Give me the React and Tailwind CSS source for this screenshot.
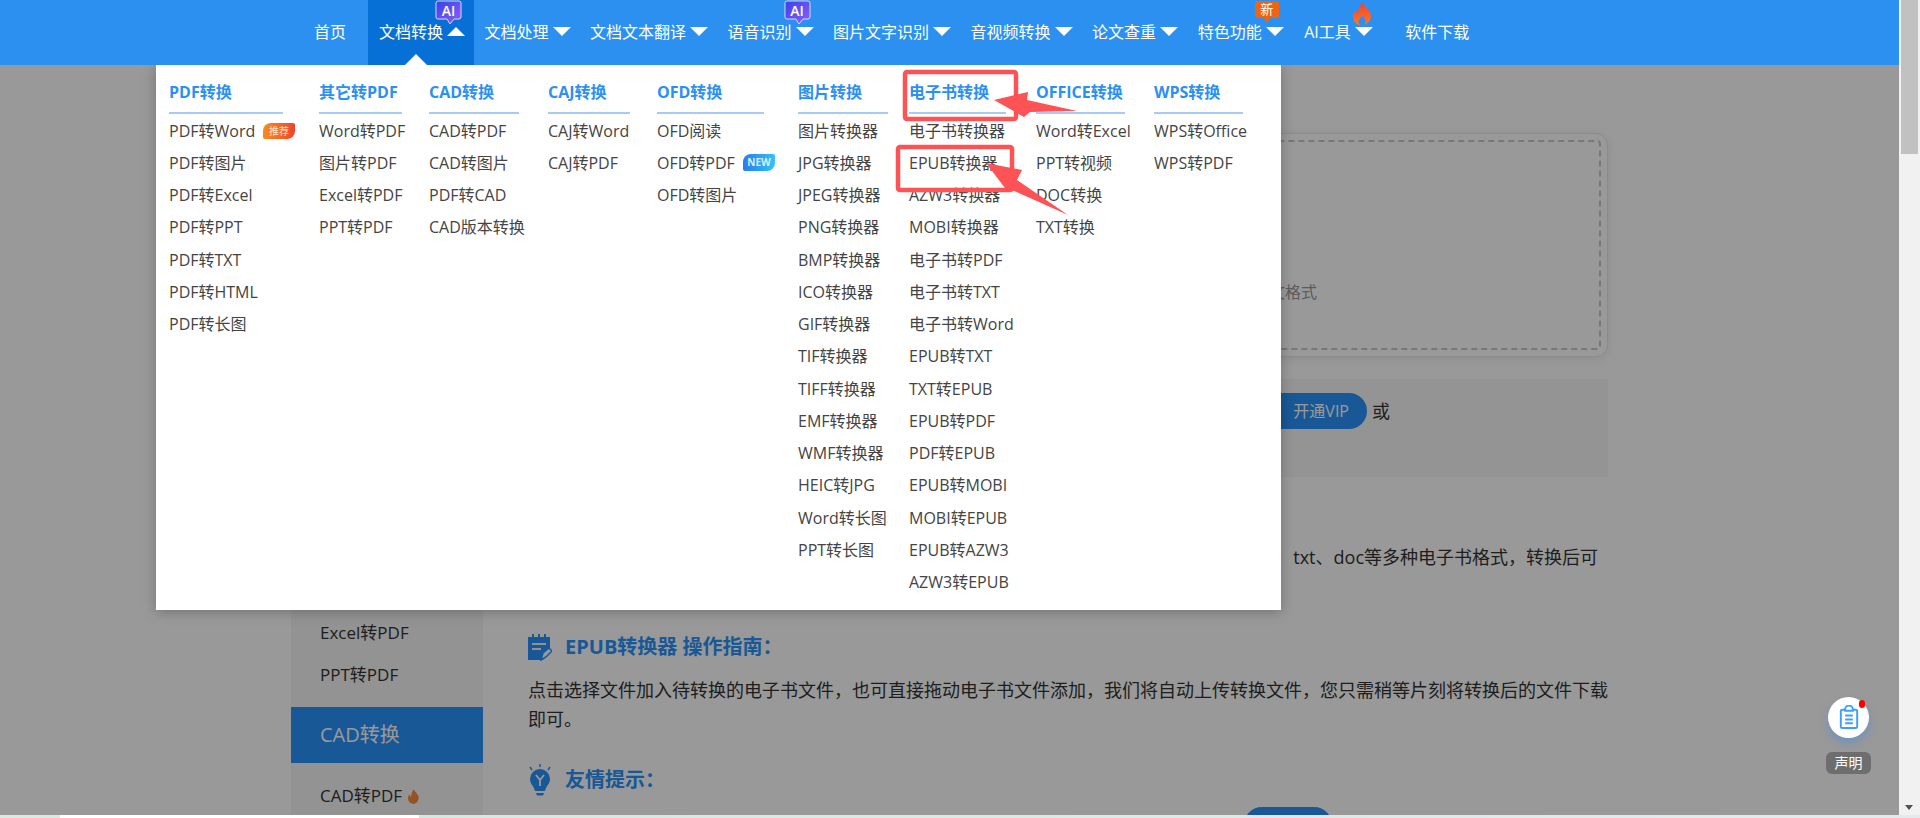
import React from "react";

const font = { fontFamily: '"Open Sans", "Noto Sans CJK SC", sans-serif' };

const navItems = [
  { label: "首页", plain: true },
  { label: "文档转换", active: true, badge: "ai" },
  { label: "文档处理" },
  { label: "文档文本翻译" },
  { label: "语音识别", badge: "ai" },
  { label: "图片文字识别" },
  { label: "音视频转换" },
  { label: "论文查重" },
  { label: "特色功能", badge: "new" },
  { label: "AI工具", badge: "fire" },
  { label: "软件下载", plain: true },
];

const columns = [
  { title: "PDF转换", width: "w-[114px]", gap: "mr-[36px]", items: ["PDF转Word", "PDF转图片", "PDF转Excel", "PDF转PPT", "PDF转TXT", "PDF转HTML", "PDF转长图"] },
  { title: "其它转PDF", width: "w-[83px]", gap: "mr-[27px]", items: ["Word转PDF", "图片转PDF", "Excel转PDF", "PPT转PDF"] },
  { title: "CAD转换", width: "w-[90px]", gap: "mr-[29px]", items: ["CAD转PDF", "CAD转图片", "PDF转CAD", "CAD版本转换"] },
  { title: "CAJ转换", width: "w-[82px]", gap: "mr-[27px]", items: ["CAJ转Word", "CAJ转PDF"] },
  { title: "OFD转换", width: "w-[107px]", gap: "mr-[34px]", items: ["OFD阅读", "OFD转PDF", "OFD转图片"] },
  { title: "图片转换", width: "w-[90px]", gap: "mr-[21px]", items: ["图片转换器", "JPG转换器", "JPEG转换器", "PNG转换器", "BMP转换器", "ICO转换器", "GIF转换器", "TIF转换器", "TIFF转换器", "EMF转换器", "WMF转换器", "HEIC转JPG", "Word转长图", "PPT转长图"] },
  { title: "电子书转换", width: "w-[97px]", gap: "mr-[30px]", items: ["电子书转换器", "EPUB转换器", "AZW3转换器", "MOBI转换器", "电子书转PDF", "电子书转TXT", "电子书转Word", "EPUB转TXT", "TXT转EPUB", "EPUB转PDF", "PDF转EPUB", "EPUB转MOBI", "MOBI转EPUB", "EPUB转AZW3", "AZW3转EPUB"] },
  { title: "OFFICE转换", width: "w-[89px]", gap: "mr-[29px]", items: ["Word转Excel", "PPT转视频", "DOC转换", "TXT转换"] },
  { title: "WPS转换", width: "w-[89px]", gap: "", items: ["WPS转Office", "WPS转PDF"] },
];

const guideText = "点击选择文件加入待转换的电子书文件\uFF0C也可直接拖动电子书文件添加\uFF0C我们将自动上传转换文件\uFF0C您只需稍等片刻将转换后的文件下载即可。";

function Flame({ className }) {
  return (
    <svg viewBox="0 0 20 24" className={className}>
      <defs>
        <linearGradient id="flameFill" x1="0" y1="0" x2="0" y2="1">
          <stop offset="0" stopColor="#f5402a" />
          <stop offset="1" stopColor="#fb7a2a" />
        </linearGradient>
      </defs>
      <path d="M11 0c0 5 7 7 8 13 .8 5-4 10-9 10.500C5 24 1 19 1 14.500c0-3 1.500-5.500 3-7 0 2 .8 3.400 2 4C6 7 8 3 11 0z" fill="url(#flameFill)" />
      <path d="M10.500 13c.4 2 3 3.500 3 6 0 2-1.500 5-3.500 5s-3.500-2.500-3.500-4.500c0-2.500 3-4 4-6.500z" fill="#2b90f0" />
    </svg>
  );
}

function AiBadge() {
  return (
    <div className="absolute top-0 right-[11.500px] w-[27px] h-[25px]">
      <svg viewBox="0 0 27 25" className="absolute inset-0 w-full h-full">
        <defs>
          <linearGradient id="aiFill" x1="0" y1="0" x2="1" y2="1">
            <stop offset="0" stopColor="#3d3fe8" />
            <stop offset="1" stopColor="#8a63f7" />
          </linearGradient>
        </defs>
        <path d="M3 1h21a2 2 0 0 1 2 2v14a2 2 0 0 1-2 2h-5l-4 5-3-5H3a2 2 0 0 1-2-2V3a2 2 0 0 1 2-2z" fill="url(#aiFill)" stroke="#d9d6fb" strokeWidth="1" />
      </svg>
      <span className="absolute left-0 right-0 top-[1px] text-center text-[14px] leading-[19px] font-semibold text-white">AI</span>
    </div>
  );
}

function NewBadge() {
  return (
    <div className="absolute top-[1px] right-[13.500px] w-[24px] h-[22px]">
      <svg viewBox="0 0 24 22" className="absolute inset-0 w-full h-full">
        <path d="M2 0h20a2 2 0 0 1 2 2v13a2 2 0 0 1-2 2h-7l-3 5-3-5H2a2 2 0 0 1-2-2V2a2 2 0 0 1 2-2z" fill="#f2630f" />
      </svg>
      <span className="absolute left-0 right-0 top-0 text-center text-[13px] leading-[17px] text-white">新</span>
    </div>
  );
}

function NavItem({ item }) {
  let pad = "pl-[11px] pr-[8.500px]";
  if (item.plain) pad = "px-[22px]";
  if (item.badge === "fire") pad = "pl-[12px] pr-[10.500px]";
  return (
    <div className={`relative h-full flex items-start pt-[22px] ${pad} ${item.active ? "bg-[#0670d6]" : ""}`}>
      <span className="text-[16px] leading-[21px] text-white whitespace-nowrap">{item.label}</span>
      {!item.plain && (
        <span className={`ml-[4px] mt-[5px] w-0 h-0 border-x-[9px] border-x-transparent ${item.active ? "border-b-[9px] border-b-white" : "border-t-[9px] border-t-white"}`} />
      )}
      {item.badge === "ai" && <AiBadge />}
      {item.badge === "new" && <NewBadge />}
      {item.badge === "fire" && <Flame className="absolute top-[2px] right-[11px] w-[20px] h-[24px]" />}
      {item.active && (
        <span className="absolute left-[37px] bottom-0 w-0 h-0 border-x-[11px] border-x-transparent border-b-[11px] border-b-white" />
      )}
    </div>
  );
}

function MenuColumn({ col }) {
  return (
    <div className={`${col.width} ${col.gap} shrink-0`}>
      <div className="h-[37px] border-b-2 border-[#a8cbf5] text-[16px] leading-[21px] pt-[5px] font-bold text-[#2a90f2] whitespace-nowrap">{col.title}</div>
      <div className="pt-[0.500px]">
        {col.items.map((name) => (
          <div key={name} className="relative h-[32.250px] text-[16px] leading-[32px] text-[#444] whitespace-nowrap">
            {name}
            {name === "PDF转Word" && (
              <span className="absolute left-[94px] top-[8px] w-[32px] h-[16px] rounded-tl-[8px] rounded-br-[8px] rounded-tr-[2px] rounded-bl-[2px] bg-gradient-to-r from-[#fb8a1e] to-[#f0402e] text-[10px] leading-[16px] text-center text-[#ffe3d4]">推荐</span>
            )}
            {name === "OFD转PDF" && (
              <span className="absolute left-[86px] top-[7px] w-[32px] h-[17px] rounded-tl-[8px] rounded-br-[8px] rounded-tr-[2px] rounded-bl-[2px] bg-gradient-to-r from-[#2a7bf0] to-[#35c3f5] text-[10px] leading-[17px] font-bold text-center text-[#d8f0ff]">NEW</span>
            )}
          </div>
        ))}
      </div>
    </div>
  );
}

function DropDown() {
  return (
    <div className="absolute left-[156px] top-[65px] w-[1125px] h-[545px] bg-white shadow-[0_2px_12px_rgba(0,0,0,0.25)] flex items-start pl-[13px] pt-[12px]">
      {columns.map((col) => (
        <MenuColumn key={col.title} col={col} />
      ))}
    </div>
  );
}

function NoteIcon() {
  return (
    <svg viewBox="0 0 24 28" className="w-[24px] h-[28px]">
      <path d="M0 4h4V1h2v3h4V1h2v3h4V1h2v3h4v14l-7 9H0z" fill="#2b93fa" />
      <path d="M4 10h14v2H4zM4 15h9v2H4z" fill="#f2f2f2" />
      <path d="M13 27l2-7 6-5 3 3-6 6z" fill="#fff" stroke="#2b93fa" strokeWidth="1.500" />
    </svg>
  );
}

function BulbIcon() {
  return (
    <svg viewBox="0 0 24 32" className="w-[24px] h-[32px]">
      <path d="M12 0v3M2 3l2 3M22 3l-2 3" stroke="#2b93fa" strokeWidth="1.500" />
      <path d="M12 5a10 10 0 0 1 10 10c0 5-4 7-5 12H7c-1-5-5-7-5-12A10 10 0 0 1 12 5z" fill="#2b93fa" />
      <path d="M8 29h8l-1 2.500H9z" fill="#2b93fa" />
      <path d="M8 11l4 5 4-5M12 16v6" stroke="#fff" strokeWidth="1.800" fill="none" />
    </svg>
  );
}

function PageBelow() {
  return (
    <div className="flex h-full pl-[291px] bg-white text-[#333]">
      <div className="w-[192px] shrink-0 bg-[#f5f5f5] pt-[547px]">
        <div className="pl-[29px] text-[17px] leading-[42px]">Excel转PDF</div>
        <div className="pl-[29px] text-[17px] leading-[42px]">PPT转PDF</div>
        <div className="mt-[11px] h-[56px] bg-[#2b93fa] pl-[29px] text-[20px] leading-[56px] text-white">CAD转换</div>
        <div className="mt-[12px] pl-[29px] flex items-center gap-[6px] text-[17px] leading-[42px]">
          CAD转PDF
          <svg viewBox="0 0 12 16" className="w-[11px] h-[15px]">
            <path d="M6.500 0c.5 2.500 4 4.500 5 8 .8 4-2.500 8-5.500 8-3.500 0-6-3-6-6 0-2 1-3.500 2-4.500 0 1.500.5 2.500 1.500 3C3.500 5 4.500 2 6.500 0z" fill="#f98a3d" />
          </svg>
        </div>
      </div>
      <div className="ml-[45px] w-[1080px] shrink-0 pt-[68px]">
        <div className="relative h-[224px] rounded-[12px] border border-[#e8e8e8] bg-white shadow-[0_2px_10px_rgba(0,0,0,0.08)] p-[6px]">
          <div className="h-full rounded-[4px] border-2 border-dashed border-[#c8c8c8] flex items-start justify-end pr-[282px] pt-[138px] text-[16px] leading-[24px] text-[#999]">
            支持电子书、文档、图文格式
          </div>
        </div>
        <div className="mt-[22px] h-[98px] bg-[#f7f7f7] flex items-start justify-end pt-[14px] pr-[218px]">
          <span className="h-[36px] w-[124px] rounded-full bg-[#2b93fa] text-white text-[16px] leading-[36px] text-right pr-[18px]">开通VIP</span>
          <span className="ml-[5px] text-[18px] leading-[36px]">或</span>
        </div>
        <div className="mt-[65px] text-[18px] leading-[30px] text-right pr-[10px]">{"txt、doc等多种电子书格式\uFF0C转换后可"}</div>
        <div className="mt-[60px] flex items-center gap-[13px] h-[30px]">
          <NoteIcon />
          <span className="text-[20px] font-bold text-[#2b93fa]">{"EPUB转换器 操作指南\uFF1A"}</span>
        </div>
        <div className="mt-[14px] text-[18px] leading-[29px]">{guideText}</div>
        <div className="mt-[31px] flex items-center gap-[13px] h-[30px]">
          <BulbIcon />
          <span className="text-[20px] font-bold text-[#2b93fa]">{"友情提示\uFF1A"}</span>
        </div>
        <div className="mt-[12px] ml-[716px] w-[88px] h-[36px] rounded-full bg-[#2b93fa]" />
      </div>
    </div>
  );
}

function FloatWidget() {
  return (
    <div className="absolute left-[1826px] top-[632px] w-[45px] flex flex-col items-center">
      <div className="relative w-[41px] h-[41px] rounded-full bg-white shadow-[0_5px_9px_rgba(60,140,230,0.45)] flex items-center justify-center">
        <svg viewBox="0 0 20 26" className="w-[20px] h-[25px]" fill="none" stroke="#3f9dfb" strokeWidth="2">
          <path d="M6 5H3a1.500 1.500 0 0 0-1.500 1.500v16A1.500 1.500 0 0 0 3 24h14a1.500 1.500 0 0 0 1.500-1.500v-16A1.500 1.500 0 0 0 17 5h-3" />
          <path d="M6 6V4.500a4 4 0 0 1 8 0V6z" />
          <path d="M6 11h8M6 15h8M6 19h8" />
        </svg>
        <span className="absolute right-[4px] top-[3px] w-[6px] h-[8px] rounded-full bg-[#f00]" />
      </div>
      <div className="mt-[14px] w-[45px] h-[22px] rounded-[6px] bg-[#6e6e6e] text-white text-[14px] leading-[22px] text-center">声明</div>
    </div>
  );
}

function Annotations() {
  return (
    <svg className="absolute left-0 top-0 pointer-events-none" width="1899" height="815">
      <rect x="905" y="72" width="111" height="47" rx="2" fill="none" stroke="#fe5356" strokeWidth="4.500" />
      <rect x="898" y="147" width="114" height="43" rx="2" fill="none" stroke="#fe5356" strokeWidth="4.500" />
      <polygon points="994,100 1028,92 1027,100 1077,111 1030,112 1024,117" fill="#fe5356" />
      <polygon points="986,163 1022,170 1017,180 1068,215 1012,190 1008,192" fill="#fe5356" />
    </svg>
  );
}

function Scrollbar() {
  return (
    <div className="w-[21px] h-full bg-[#f1f1f1] relative shrink-0">
      <div className="absolute left-[2px] top-0 w-[17px] h-[154px] bg-[#c1c1c1]" />
      <span className="absolute left-[6px] bottom-[5px] w-0 h-0 border-x-[4.500px] border-x-transparent border-t-[5px] border-t-[#505050]" />
    </div>
  );
}

export default function App() {
  return (
    <div className="w-[1920px] h-[818px] overflow-hidden flex flex-col" style={font}>
      <div className="flex h-[815px]">
        <div className="relative w-[1899px] h-full overflow-hidden">
          <header className="relative z-10 h-[65px] bg-[#2b90f0] flex pl-[292px]">
            {navItems.map((item) => (
              <NavItem key={item.label} item={item} />
            ))}
          </header>
          <div className="absolute left-0 right-0 top-[65px] bottom-0">
            <PageBelow />
            <div className="absolute inset-0 bg-black/40" />
            <FloatWidget />
          </div>
          <DropDown />
          <Annotations />
        </div>
        <Scrollbar />
      </div>
      <div className="h-[3px] flex">
        <div className="w-[60px] bg-[#dbe9e3]" />
        <div className="w-[359px] bg-white" />
        <div className="flex-1 bg-gradient-to-r from-[#d5e8e0] to-[#e4eaec]" />
      </div>
    </div>
  );
}
